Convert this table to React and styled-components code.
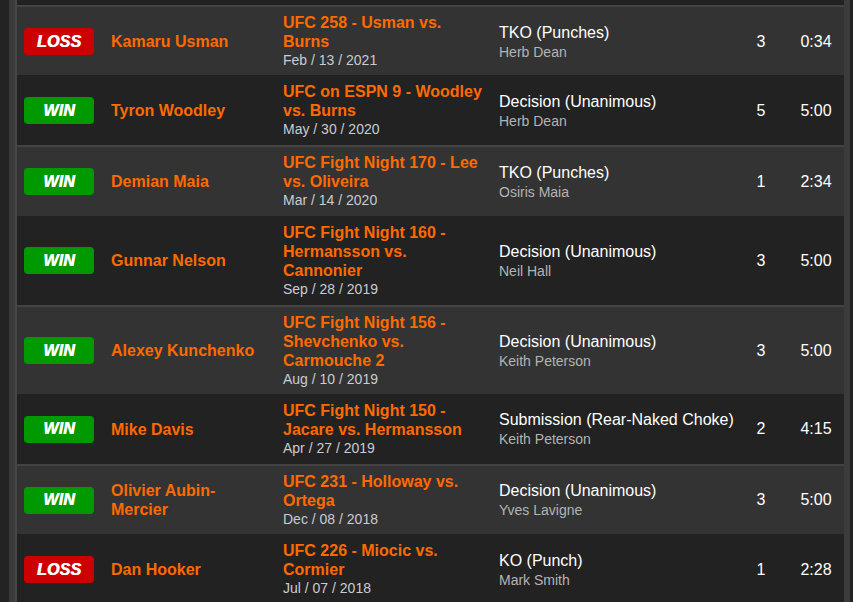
import React from "react";
import styled, { createGlobalStyle } from "styled-components";

const Global = createGlobalStyle`
  html, body { margin: 0; padding: 0; background: #232323; }
  body { font-family: "Liberation Sans", Arial, sans-serif; overflow: hidden; }
`;

const Frame = styled.div`
  margin-left: 9px;
  width: 841px;
  min-height: 602px;
  box-sizing: border-box;
  padding: 0 6px 0 6px;
  background: #3b3b3b;
`;

const Table = styled.div`
  border-left: 2px solid #474747;
  display: flex;
  flex-direction: column;
`;

const CutRow = styled.div`
  height: 5px;
  background: #222;
`;

const Row = styled.div`
  display: grid;
  grid-template-columns: 94px 172px 216px 245px 34px 66px;
  align-items: center;
  background: ${(p) => (p.$light ? "#333" : "#222")};
  border-top: ${(p) => (p.$light ? "2px solid #434343" : "none")};
  padding: ${(p) => (p.$light ? "6px 0 5.3px" : "7px 0 6px")};
`;

const BadgeCell = styled.div`
  padding-left: 7px;
`;

const Badge = styled.div`
  width: 70px;
  height: 27px;
  border-radius: 4px;
  background: ${(p) => (p.$win ? "#009a00" : "#cc0000")};
  color: #fff;
  display: flex;
  align-items: center;
  justify-content: center;
  font-weight: 700;
  font-style: italic;
  font-size: 16px;
  letter-spacing: 0.2px;
  text-shadow: 0.6px 0 0 #fff;
`;

const Name = styled.div`
  color: #ff6a00;
  font-weight: 700;
  font-size: 16px;
  line-height: 19px;
  padding-right: 14px;
`;

const Event = styled.div`
  padding-right: 10px;
  display: flex;
  flex-direction: column;
`;

const EventTitle = styled.div`
  color: #ff6a00;
  font-weight: 700;
  font-size: 16px;
  line-height: 19px;
`;

const EventDate = styled.div`
  color: #c9ccd2;
  font-size: 14px;
  line-height: 19px;
`;

const Method = styled.div`
  display: flex;
  flex-direction: column;
`;

const MethodName = styled.div`
  color: #fff;
  font-size: 16px;
  line-height: 20px;
`;

const Referee = styled.div`
  color: #b4b4b4;
  font-size: 14px;
  line-height: 18px;
`;

const Round = styled.div`
  color: #fff;
  font-size: 16px;
  text-align: center;
`;

const Time = styled.div`
  color: #fff;
  font-size: 16px;
  text-align: center;
  padding-left: 10px;
`;

const fights = [
  { win: false, name: "Kamaru Usman", event: "UFC 258 - Usman vs. Burns", date: "Feb / 13 / 2021", method: "TKO (Punches)", ref: "Herb Dean", round: 3, time: "0:34" },
  { win: true, name: "Tyron Woodley", event: "UFC on ESPN 9 - Woodley vs. Burns", date: "May / 30 / 2020", method: "Decision (Unanimous)", ref: "Herb Dean", round: 5, time: "5:00" },
  { win: true, name: "Demian Maia", event: "UFC Fight Night 170 - Lee vs. Oliveira", date: "Mar / 14 / 2020", method: "TKO (Punches)", ref: "Osiris Maia", round: 1, time: "2:34" },
  { win: true, name: "Gunnar Nelson", event: "UFC Fight Night 160 - Hermansson vs. Cannonier", date: "Sep / 28 / 2019", method: "Decision (Unanimous)", ref: "Neil Hall", round: 3, time: "5:00" },
  { win: true, name: "Alexey Kunchenko", event: "UFC Fight Night 156 - Shevchenko vs. Carmouche 2", date: "Aug / 10 / 2019", method: "Decision (Unanimous)", ref: "Keith Peterson", round: 3, time: "5:00" },
  { win: true, name: "Mike Davis", event: "UFC Fight Night 150 - Jacare vs. Hermansson", date: "Apr / 27 / 2019", method: "Submission (Rear-Naked Choke)", ref: "Keith Peterson", round: 2, time: "4:15" },
  { win: true, name: "Olivier Aubin-Mercier", event: "UFC 231 - Holloway vs. Ortega", date: "Dec / 08 / 2018", method: "Decision (Unanimous)", ref: "Yves Lavigne", round: 3, time: "5:00" },
  { win: false, name: "Dan Hooker", event: "UFC 226 - Miocic vs. Cormier", date: "Jul / 07 / 2018", method: "KO (Punch)", ref: "Mark Smith", round: 1, time: "2:28" },
];

export default function App() {
  return (
    <>
      <Global />
      <Frame>
        <Table>
          <CutRow />
          {fights.map((f, i) => (
            <Row key={i} $light={i % 2 === 0}>
              <BadgeCell>
                <Badge $win={f.win}>{f.win ? "WIN" : "LOSS"}</Badge>
              </BadgeCell>
              <Name>{f.name}</Name>
              <Event>
                <EventTitle>{f.event}</EventTitle>
                <EventDate>{f.date}</EventDate>
              </Event>
              <Method>
                <MethodName>{f.method}</MethodName>
                <Referee>{f.ref}</Referee>
              </Method>
              <Round>{f.round}</Round>
              <Time>{f.time}</Time>
            </Row>
          ))}
        </Table>
      </Frame>
    </>
  );
}
